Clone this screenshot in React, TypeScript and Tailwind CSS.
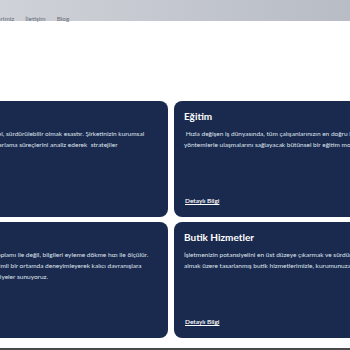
const font = { fontFamily: 'Lato, "Noto Sans", sans-serif' }

const cards = [
  {
    title: 'Danışmanlık',
    lines: [
      'Rekabetçi pazarda başarının yolu stratejik, operasyonel, sürdürülebilir olmak esastır. Şirketinizin kurumsal',
      'yapısını, insan kaynaklarını, finansal durumunu ve pazarlama süreçlerini analiz ederek  stratejiler',
    ],
  },
  {
    title: 'Eğitim',
    lines: [
      ' Hızla değişen iş dünyasında, tüm çalışanlarınızın en doğru bilgiye',
      'yöntemlerle ulaşmalarını sağlayacak bütünsel bir eğitim modeli',
    ],
  },
  {
    title: 'Koçluk',
    lines: [
      'Kurumların gelişimi, çalışanlarının sahip olduğu bilgi toplamı ile değil, bilgileri eyleme dökme hızı ile ölçülür.',
      'Eğitimlerimizde öğrenilenleri gerçekçi ve güçlü etkileşimli bir ortamda deneyimleyerek kalıcı davranışlara',
      'dönüştürmenizi sağlayan farklı eğitim programı ve seviyeler sunuyoruz.',
    ],
  },
  {
    title: 'Butik Hizmetler',
    lines: [
      'İşletmenizin potansiyelini en üst düzeye çıkarmak ve sürdürülebilir',
      'almak üzere tasarlanmış butik hizmetlerimizle, kurumunuza özel',
    ],
  },
]

export default function App() {
  return (
    <div className="relative w-[350px] h-[350px] overflow-hidden bg-white" style={font}>
      <header className="h-[21px] bg-gradient-to-r from-[#cfd2d8] to-[#b8bcc5] pt-[15px]">
        <nav className="flex gap-[11px] -ml-[25px] text-[6.5px] leading-[7px] text-[#6b7079]">
          <span>Hizmetlerimiz</span>
          <span>İletişim</span>
          <span>Blog</span>
        </nav>
      </header>

      <main className="mt-[80px] -ml-[162px] grid grid-cols-[330px_330px] gap-x-[6px] gap-y-[5px]">
        {cards.map((card, i) => (
          <div
            key={i}
            className="h-[116px] rounded-[8px] bg-[#1a2a4e] px-[10px] pt-[9px] pb-[11px] flex flex-col text-white"
          >
            <h3 className="text-[10px] font-bold leading-[13px]">{card.title}</h3>
            <div className="mt-[5px] text-[6.5px] leading-[11px] text-[#dfe3ec]">
              {card.lines.map((line, idx) => (
                <p key={idx} className="whitespace-pre">
                  {line}
                </p>
              ))}
            </div>
            <a className="mt-auto ml-[1px] text-[6.5px] font-semibold underline underline-offset-1">Detaylı Bilgi</a>
          </div>
        ))}
      </main>

      <div className="absolute bottom-0 left-0 w-full h-[2px] bg-[#4a4a4a]" />
    </div>
  )
}
